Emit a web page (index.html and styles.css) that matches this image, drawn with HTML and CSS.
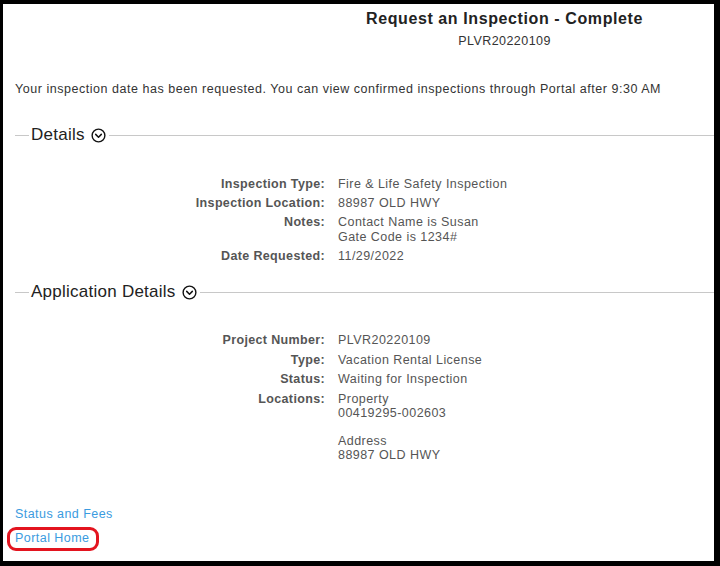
FILE: index.html
```html
<!DOCTYPE html>
<html>
<head>
<meta charset="utf-8">
<link rel="stylesheet" href="styles.css">
</head>
<body>
<div class="frame">
  <div class="header">
    <h1 class="title">Request an Inspection - Complete</h1>
    <div class="subtitle">PLVR20220109</div>
  </div>
  <p class="message">Your inspection date has been requested. You can view confirmed inspections through Portal after 9:30 AM</p>

  <div class="legend">
    <span class="legend-text">Details</span>
    <svg class="chev" width="15" height="15" viewBox="0 0 16 16"><circle cx="8" cy="8" r="6.8" fill="none" stroke="#111" stroke-width="1.5"/><path d="M5 6.8 L8 9.8 L11 6.8" fill="none" stroke="#111" stroke-width="1.6" stroke-linecap="round" stroke-linejoin="round"/></svg>
  </div>
  <dl class="grid grid-details">
    <dt>Inspection Type:</dt><dd>Fire &amp; Life Safety Inspection</dd>
    <dt>Inspection Location:</dt><dd>88987 OLD HWY</dd>
    <dt>Notes:</dt><dd>Contact Name is Susan<br>Gate Code is 1234#</dd>
    <dt>Date Requested:</dt><dd>11/29/2022</dd>
  </dl>

  <div class="legend legend-app">
    <span class="legend-text">Application Details</span>
    <svg class="chev" width="15" height="15" viewBox="0 0 16 16"><circle cx="8" cy="8" r="6.8" fill="none" stroke="#111" stroke-width="1.5"/><path d="M5 6.8 L8 9.8 L11 6.8" fill="none" stroke="#111" stroke-width="1.6" stroke-linecap="round" stroke-linejoin="round"/></svg>
  </div>
  <dl class="grid grid-app">
    <dt>Project Number:</dt><dd>PLVR20220109</dd>
    <dt>Type:</dt><dd>Vacation Rental License</dd>
    <dt>Status:</dt><dd>Waiting for Inspection</dd>
    <dt>Locations:</dt><dd>Property<br>00419295-002603<br><br>Address<br>88987 OLD HWY</dd>
  </dl>

  <div class="links">
    <a class="link" href="#">Status and Fees</a>
    <a class="link link-home" href="#">Portal Home</a>
  </div>
</div>
</body>
</html>
```
FILE: styles.css
```css
* { box-sizing: border-box; }
html, body { margin: 0; padding: 0; }
body {
  font-family: "Liberation Sans", Arial, sans-serif;
  background: #000;
}
.frame {
  width: 720px;
  height: 566px;
  border-style: solid;
  border-color: #000;
  border-width: 4px 6px 5px 3px;
  background: #fff;
  padding: 0 0 0 12px;
  color: #333;
}
.header {
  padding-left: 280px;
  text-align: center;
  width: 699px;
}
.title {
  margin: 0;
  padding-top: 6px;
  font-size: 16px;
  line-height: 18px;
  font-weight: bold;
  letter-spacing: 0.6px;
  color: #222;
}
.subtitle {
  margin-top: 6px;
  font-size: 12.5px;
  line-height: 14px;
  letter-spacing: 0.45px;
  color: #333;
}
.message {
  margin: 34px 0 0 0;
  font-size: 12.5px;
  line-height: 14px;
  color: #333;
  letter-spacing: 0.53px;
}
.legend {
  display: flex;
  align-items: center;
  margin-top: 29px;
  width: 699px;
}
.legend::before {
  content: "";
  width: 14px;
  height: 1px;
  background: #c8c8c8;
  margin-right: 2px;
}
.legend::after {
  content: "";
  flex: 1;
  height: 1px;
  background: #c8c8c8;
  margin-left: 3px;
}
.legend-text {
  font-size: 17px;
  line-height: 20px;
  letter-spacing: 0.25px;
  color: #222;
}
.chev { margin-left: 6px; display: block; }
.grid {
  display: grid;
  grid-template-columns: 310px auto;
  column-gap: 13px;
  row-gap: 4.5px;
  margin: 0;
  font-size: 12.5px;
  line-height: 14.5px;
  letter-spacing: 0.45px;
}
.grid dt {
  text-align: right;
  font-weight: bold;
  color: #555;
  letter-spacing: 0.35px;
}
.grid dd {
  margin: 0;
  color: #555;
}
.grid-details { margin-top: 32px; }
.legend-app { margin-top: 19px; }
.grid-app {
  margin-top: 31px;
  line-height: 14px;
  row-gap: 5.5px;
}
.links {
  margin-top: 45px;
  display: flex;
  flex-direction: column;
  align-items: flex-start;
  gap: 9px;
}
.link {
  color: #3a9be0;
  text-decoration: none;
  font-size: 12.5px;
  line-height: 15px;
  letter-spacing: 0.45px;
}
.link-home {
  position: relative;
}
.link-home::after {
  content: "";
  position: absolute;
  left: -8px;
  right: -10px;
  top: -4px;
  bottom: -5px;
  border: 3px solid #e3141f;
  border-radius: 9px;
}
```
